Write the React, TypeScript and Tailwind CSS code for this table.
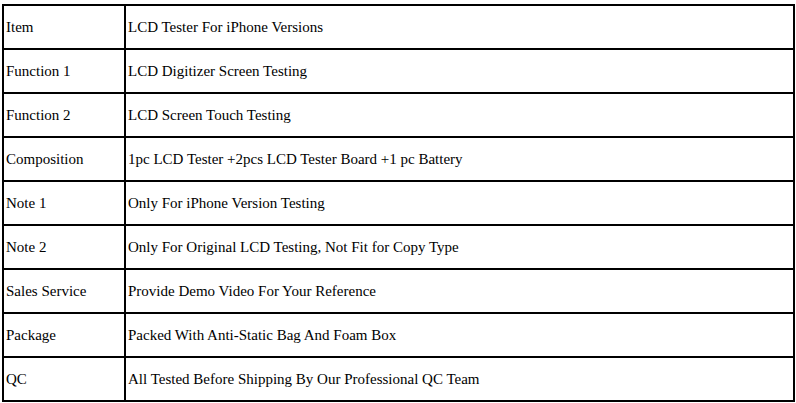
const rows: [string, string][] = [
  ['Item', 'LCD Tester For iPhone Versions'],
  ['Function 1', 'LCD Digitizer Screen Testing'],
  ['Function 2', 'LCD Screen Touch Testing'],
  ['Composition', '1pc LCD Tester +2pcs LCD Tester Board +1 pc Battery'],
  ['Note 1', 'Only For iPhone Version Testing'],
  ['Note 2', 'Only For Original LCD Testing, Not Fit for Copy Type'],
  ['Sales Service', 'Provide Demo Video For Your Reference'],
  ['Package', 'Packed With Anti-Static Bag And Foam Box'],
  ['QC', 'All Tested Before Shipping By Our Professional QC Team'],
]

export default function App() {
  return (
    <div className="w-[796px] h-[403px] bg-white pt-[4px] pl-[2px] font-['Liberation_Serif',serif] text-[15px] text-black">
      <div className="w-[793px] border-t-2 border-l-2 border-black">
        {rows.map(([label, value]) => (
          <div key={label} className="flex h-[44px] border-b-2 border-black">
            <div className="w-[122px] shrink-0 flex items-center pl-[2px] border-r-2 border-black">
              {label}
            </div>
            <div className="flex-1 flex items-center pl-[2px] border-r-2 border-black">
              {value}
            </div>
          </div>
        ))}
      </div>
    </div>
  )
}
